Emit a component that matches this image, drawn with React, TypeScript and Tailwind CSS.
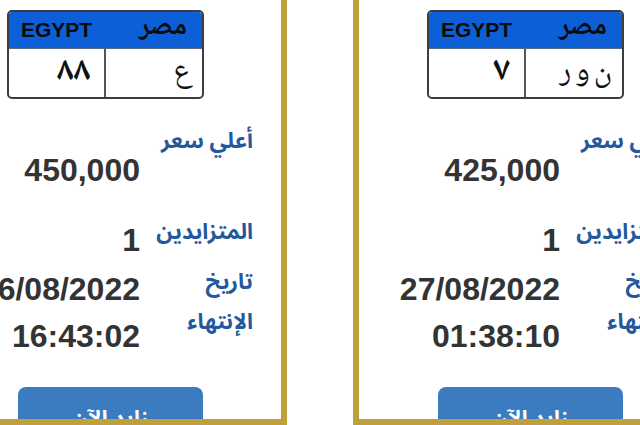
import React from "react";

type CardData = {
  letters: string[];
  digits: string;
  price: string;
  bidders: string;
  date: string;
  time: string;
};

function Plate({ letters, digits }: { letters: string[]; digits: string }) {
  return (
    <div className="w-[197px] h-[89px] rounded-[5px] border-2 border-[#3d3d3d] overflow-hidden flex flex-col bg-white">
      <div className="h-[37px] bg-[#0c5fd6] border-b border-[#5a6a80] flex items-center justify-between pl-[12px] pr-[15px]">
        <span className="text-[21px] font-bold text-[#0a0a0a] font-['Liberation_Sans',Arial,sans-serif]">
          EGYPT
        </span>
        <span
          className="text-[28px] font-bold text-[#0a0a0a] leading-none mt-[-4px] font-['Noto_Naskh_Arabic','Noto_Sans_Arabic',serif]"
          dir="rtl"
        >
          مصر
        </span>
      </div>
      <div className="flex-1 flex">
        <div className="w-[97px] border-r-2 border-[#555] flex items-center justify-end pr-[14px]">
          <span
            className="text-[34px] font-bold text-[#111] leading-none font-['Noto_Naskh_Arabic','Noto_Sans_Arabic',serif]"
            dir="rtl"
          >
            {digits}
          </span>
        </div>
        <div className="flex-1 flex items-center justify-start gap-[4px] pr-[10px]" dir="rtl">
          {letters.map((l, i) => (
            <span
              key={i}
              className="text-[31px] text-[#111] leading-none font-['Noto_Naskh_Arabic','Noto_Sans_Arabic',serif]"
            >
              {l}
            </span>
          ))}
        </div>
      </div>
    </div>
  );
}

function Label({ children, className = "" }: { children: React.ReactNode; className?: string }) {
  return (
    <div
      className={
        "w-[113px] shrink-0 text-[22px] font-bold text-[#23599c] font-['Noto_Sans_Arabic','DejaVu_Sans',sans-serif] " +
        className
      }
    >
      {children}
    </div>
  );
}

function Card({ d }: { d: CardData }) {
  return (
    <div className="w-[354px] shrink-0 bg-white border-x-[6px] border-b-[6px] border-[#c0a03c]">
      <div className="h-[419px] overflow-hidden flex flex-col">
        <div className="pt-[10px] pl-[68px]">
          <Plate letters={d.letters} digits={d.digits} />
        </div>

        <div className="pr-[28px] mt-[26px]" dir="rtl">
          <div className="flex items-start">
            <Label className="leading-[32px]">أعلي سعر</Label>
            <div
              className="mt-[27px] text-[32px] font-bold leading-[36px] text-[#333] font-['Liberation_Sans',Arial,sans-serif]"
              dir="ltr"
            >
              {d.price}
            </div>
          </div>

          <div className="flex items-start mt-[28px]">
            <Label className="leading-[32px]">المتزايدين</Label>
            <div
              className="mt-[6px] text-[32px] font-bold leading-[36px] text-[#333] font-['Liberation_Sans',Arial,sans-serif]"
              dir="ltr"
            >
              {d.bidders}
            </div>
          </div>

          <div className="flex items-start mt-[4px]">
            <Label className="leading-[40px]">
              <div>تاريخ</div>
              <div>الإنتهاء</div>
            </Label>
            <div className="mt-[4px] text-[32px] font-bold leading-[47px] text-[#333] text-right font-['Liberation_Sans',Arial,sans-serif]">
              <div dir="ltr">{d.date}</div>
              <div dir="ltr">{d.time}</div>
            </div>
          </div>
        </div>

        <div className="flex justify-center mt-[27px]">
          <div
            className="w-[185px] h-[54px] shrink-0 rounded-[8px] bg-[#3b7cc0] text-white text-[22px] font-bold text-center pt-[15px] leading-[34px] font-['Noto_Sans_Arabic','DejaVu_Sans',sans-serif]"
            dir="rtl"
          >
            زايد الآن
          </div>
        </div>
      </div>
    </div>
  );
}

export default function App() {
  const cards: CardData[] = [
    { letters: ["ع"], digits: "٨٨", price: "450,000", bidders: "1", date: "26/08/2022", time: "16:43:02" },
    { letters: ["ن", "و", "ر"], digits: "٧", price: "425,000", bidders: "1", date: "27/08/2022", time: "01:38:10" },
  ];
  return (
    <div className="w-[640px] h-[425px] bg-white overflow-hidden">
      <div className="flex gap-[66px] ml-[-67px]">
        {cards.map((c, i) => (
          <Card key={i} d={c} />
        ))}
      </div>
    </div>
  );
}
